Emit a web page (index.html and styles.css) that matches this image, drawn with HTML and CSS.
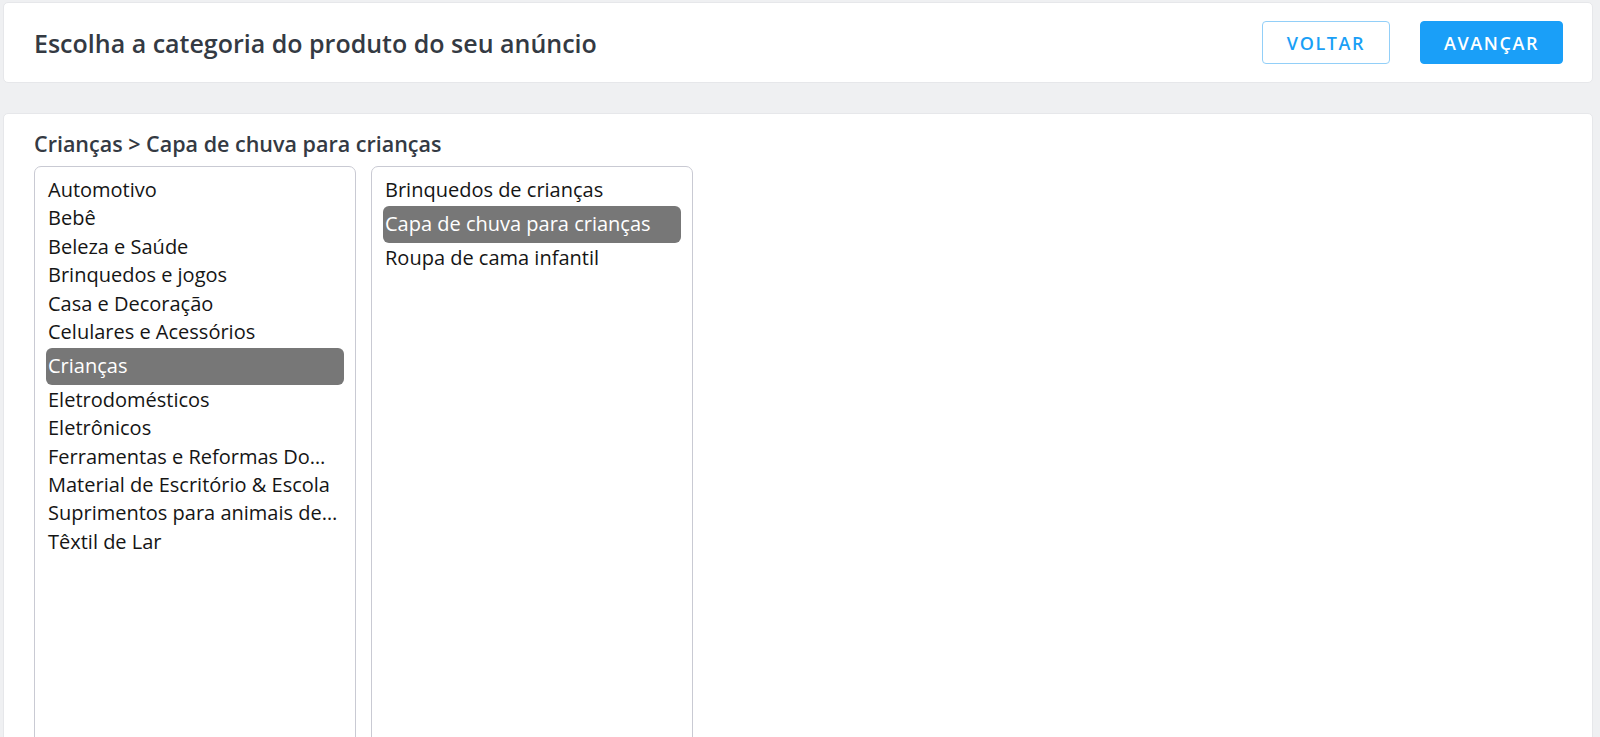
FILE: index.html
```html
<!DOCTYPE html>
<html lang="pt-BR">
<head>
  <meta charset="UTF-8" />
  <title>Escolha a categoria</title>
  <link rel="stylesheet" href="styles.css">
</head>
<body>

  <!-- Header card with title and actions -->
  <div class="card header">
    <h1>Escolha a categoria do produto do seu anúncio</h1>
    <div class="actions">
      <button class="btn btn-outline">VOLTAR</button>
      <button class="btn btn-primary">AVANÇAR</button>
    </div>
  </div>

  <!-- Category picker -->
  <div class="card picker">
    <div class="breadcrumb">Crianças &gt; Capa de chuva para crianças</div>
    <div class="columns">
      <ul class="list">
        <li>Automotivo</li>
        <li>Bebê</li>
        <li>Beleza e Saúde</li>
        <li>Brinquedos e jogos</li>
        <li>Casa e Decoração</li>
        <li>Celulares e Acessórios</li>
        <li class="selected">Crianças</li>
        <li>Eletrodomésticos</li>
        <li>Eletrônicos</li>
        <li>Ferramentas e Reformas Domésticas</li>
        <li>Material de Escritório &amp; Escola</li>
        <li>Suprimentos para animais de estimação</li>
        <li>Têxtil de Lar</li>
      </ul>
      <ul class="list">
        <li>Brinquedos de crianças</li>
        <li class="selected">Capa de chuva para crianças</li>
        <li>Roupa de cama infantil</li>
      </ul>
    </div>
  </div>

</body>
</html>
```

FILE: styles.css
```css
body {
  margin: 0;
  padding: 2px 7px 0 3px;
  background: #eff0f2;
  font-family: "Open Sans", "Noto Sans", sans-serif;
  overflow: hidden;
}
.card {
  background: #fff;
  border: 1px solid #e6e7ea;
  border-radius: 5px;
}
.header {
  height: 81px;
  box-sizing: border-box;
  display: flex;
  align-items: center;
  justify-content: space-between;
  padding: 0 29px 0 30px;
}
.header h1 {
  margin: 0;
  font-size: 25px;
  font-weight: 600;
  color: #343a43;
}
.actions {
  display: flex;
  gap: 30px;
}
.btn {
  height: 43px;
  font-family: inherit;
  font-size: 18px;
  font-weight: 600;
  letter-spacing: 1.6px;
  border-radius: 4px;
  cursor: pointer;
}
.btn-outline {
  width: 128px;
  background: #fff;
  color: #1a9ff6;
  border: 1px solid #92cff8;
}
.btn-primary {
  width: 143px;
  background: #1a9ff8;
  color: #fff;
  border: 1px solid #1a9ff8;
}
.picker {
  margin-top: 30px;
  padding: 15px 30px 0 30px;
  height: 700px;
}
.breadcrumb {
  font-size: 21.5px;
  line-height: 29px;
  font-weight: 600;
  color: #343a43;
  margin-bottom: 8px;
}
.columns {
  display: flex;
  gap: 15px;
}
.list {
  list-style: none;
  margin: 0;
  width: 322px;
  height: 620px;
  box-sizing: border-box;
  padding: 9px 11px;
  border: 1px solid #c9cad3;
  border-radius: 7px;
}
.list li {
  font-size: 20px;
  line-height: 28.4px;
  color: #151515;
  padding: 0 2px;
  white-space: nowrap;
  overflow: hidden;
  text-overflow: ellipsis;
}
.list li.selected {
  background: #777;
  color: #fff;
  border-radius: 6px;
  padding: 4px 2px;
  margin: 2px 0 1px;
}
```
